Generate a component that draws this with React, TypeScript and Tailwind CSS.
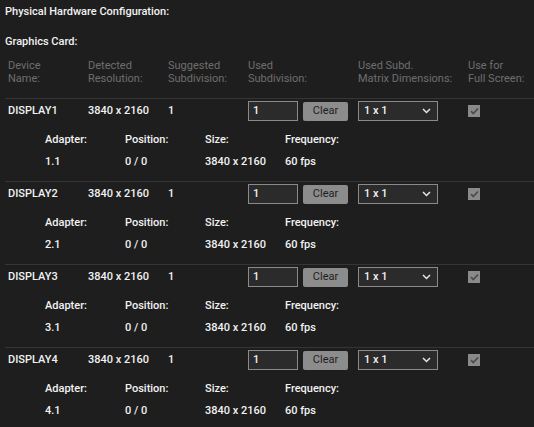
import React from 'react';

type Display = {
  name: string;
  resolution: string;
  suggested: string;
  adapter: string;
  position: string;
  size: string;
  frequency: string;
};

const displays: Display[] = [1, 2, 3, 4].map((n) => ({
  name: `DISPLAY${n}`,
  resolution: '3840 x 2160',
  suggested: '1',
  adapter: `${n}.1`,
  position: '0 / 0',
  size: '3840 x 2160',
  frequency: '60 fps',
}));

const headers = [
  ['Device', 'Name:'],
  ['Detected', 'Resolution:'],
  ['Suggested', 'Subdivision:'],
  ['Used', 'Subdivision:'],
  ['Used Subd.', 'Matrix Dimensions:'],
  ['Use for', 'Full Screen:'],
];
const widths = ['w-[80px]', 'w-[80px]', 'w-[80px]', 'w-[110px]', 'w-[110px]', 'w-[66px]'];

const Chevron = () => (
  <svg width="9" height="6" viewBox="0 0 9 6" fill="none">
    <path d="M1 1l3.5 3.5L8 1" stroke="#e5e5e5" strokeWidth="1.5" />
  </svg>
);

const DisplayRow: React.FC<{ d: Display }> = ({ d }) => (
  <div className="border-t border-[#353535] pb-[12px] pl-[3px]">
    <div className="mt-[2px] flex h-[20px] items-center font-medium text-[#f2f2f2]">
      <div className="w-[80px]">{d.name}</div>
      <div className="w-[80px]">{d.resolution}</div>
      <div className="w-[80px]">{d.suggested}</div>
      <div className="flex w-[110px] items-center gap-[5px]">
        <div className="flex h-[20px] w-[50px] items-center border border-[#8a8a8a] bg-[#2b2b2b] pl-[4px]">1</div>
        <button className="h-[19px] w-[45px] rounded-[2px] bg-[#8c8c8c] text-[11px] font-normal text-[#1e1e1e]">
          Clear
        </button>
      </div>
      <div className="w-[110px]">
        <div className="flex h-[20px] w-[80px] items-center justify-between border border-[#8a8a8a] bg-[#2b2b2b] pl-[5px] pr-[6px]">
          <span>1 x 1</span>
          <Chevron />
        </div>
      </div>
      <div className="w-[66px]">
        <div className="flex h-[12px] w-[12px] items-center justify-center bg-[#8a8a8a]">
          <svg width="9" height="8" viewBox="0 0 9 8" fill="none">
            <path d="M1 4.2l2.3 2.3L8 1.5" stroke="#4a4a4a" strokeWidth="1.7" />
          </svg>
        </div>
      </div>
    </div>
    <div className="mt-[12px] flex h-[14px] items-center pl-[37px] font-medium text-[#f2f2f2]">
      <div className="w-[80px]">Adapter:</div>
      <div className="w-[80px]">Position:</div>
      <div className="w-[80px]">Size:</div>
      <div className="w-[80px]">Frequency:</div>
    </div>
    <div className="mt-[8px] flex h-[14px] items-center pl-[37px] font-medium text-[#f2f2f2]">
      <div className="w-[80px]">{d.adapter}</div>
      <div className="w-[80px]">{d.position}</div>
      <div className="w-[80px]">{d.size}</div>
      <div className="w-[80px]">{d.frequency}</div>
    </div>
  </div>
);

export default function App() {
  return (
    <div className="h-[427px] overflow-hidden bg-[#1e1e1e] pt-[4px] text-[11px] font-['Roboto',sans-serif]">
      <div className="h-[16px] pl-[5px] text-[11px] leading-[16px] font-medium text-[#f2f2f2]">
        Physical Hardware Configuration:
      </div>
      <div className="mt-[14px] h-[16px] pl-[5px] text-[11px] leading-[16px] font-medium text-[#f2f2f2]">
        Graphics Card:
      </div>
      <div className="ml-[5px]">
        <div className="mt-[9px] flex pb-[13px] pl-[3px] text-[11px] leading-[13px] text-[#6e6e6e]">
          {headers.map((h, i) => (
            <div key={i} className={widths[i]}>
              <div>{h[0]}</div>
              <div>{h[1]}</div>
            </div>
          ))}
        </div>
        {displays.map((d) => (
          <DisplayRow key={d.name} d={d} />
        ))}
      </div>
    </div>
  );
}
